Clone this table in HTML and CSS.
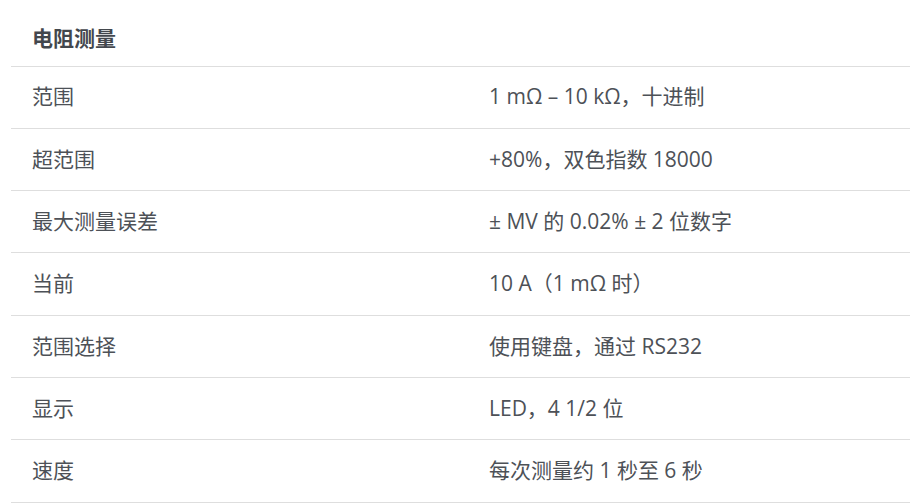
FILE: index.html
```html
<!DOCTYPE html>
<html lang="zh">
<head>
<meta charset="utf-8">
<link rel="stylesheet" href="styles.css">
</head>
<body>
<table class="spec">
  <colgroup><col class="c1"><col class="c2"></colgroup>
  <thead>
    <tr><th colspan="2" class="title">电阻测量</th></tr>
  </thead>
  <tbody>
    <tr><td class="k">范围</td><td class="v">1 mΩ – 10 kΩ，十进制</td></tr>
    <tr><td class="k">超范围</td><td class="v">+80%，双色指数 18000</td></tr>
    <tr><td class="k">最大测量误差</td><td class="v">± MV 的 0.02% ± 2 位数字</td></tr>
    <tr><td class="k">当前</td><td class="v">10 A（1 mΩ 时）</td></tr>
    <tr><td class="k">范围选择</td><td class="v">使用键盘，通过 RS232</td></tr>
    <tr><td class="k">显示</td><td class="v">LED，4 1/2 位</td></tr>
    <tr><td class="k">速度</td><td class="v">每次测量约 1 秒至 6 秒</td></tr>
  </tbody>
</table>
</body>
</html>
```
FILE: styles.css
```css
html, body {
  margin: 0;
  padding: 0;
  background: #fff;
}
body {
  font-family: "Open Sans", "Noto Sans CJK SC", sans-serif;
  color: #4d5157;
  font-size: 21px;
}
.spec {
  margin-left: 11px;
  width: 899px;
  border-collapse: collapse;
  table-layout: fixed;
}
.spec col.c1 {
  width: 457px;
}
.spec th.title {
  text-align: left;
  font-weight: 700;
  color: #43474d;
  height: 66px;
  box-sizing: border-box;
  padding: 8px 21px 0;
  border-bottom: 1px solid #dedede;
}
.spec td {
  height: 62.34px;
  box-sizing: border-box;
  padding: 0 21px;
  border-bottom: 1px solid #dedede;
  vertical-align: middle;
  line-height: 1.4;
}
```
